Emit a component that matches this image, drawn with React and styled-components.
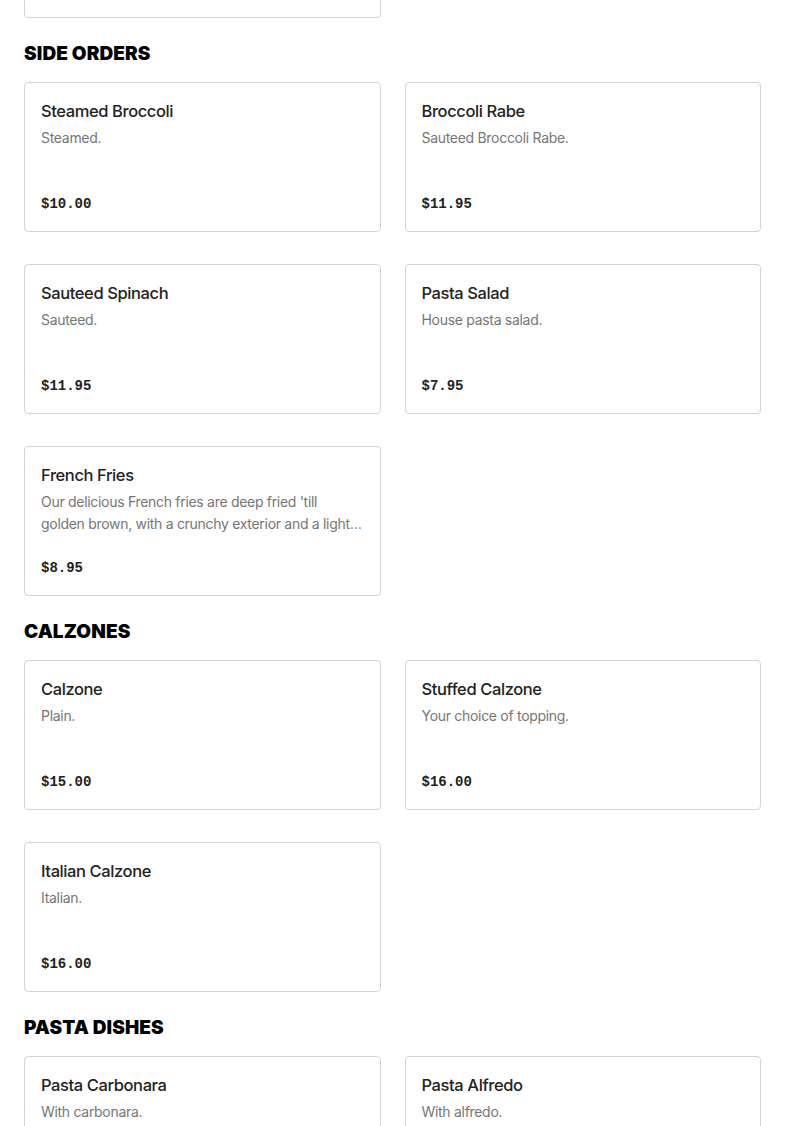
import React from "react";
import styled, { createGlobalStyle } from "styled-components";

const GlobalStyle = createGlobalStyle`
  html, body {
    margin: 0;
    padding: 0;
    background: #fff;
  }
  body {
    font-family: "Inter", "Liberation Sans", Arial, sans-serif;
    color: #222;
  }
`;

const menu = [
  {
    title: "Salads",
    hidden: true,
    items: [{ name: "House Salad", desc: "Mixed greens.", price: "$9.95" }],
  },
  {
    title: "Side Orders",
    items: [
      { name: "Steamed Broccoli", desc: "Steamed.", price: "$10.00" },
      { name: "Broccoli Rabe", desc: "Sauteed Broccoli Rabe.", price: "$11.95" },
      { name: "Sauteed Spinach", desc: "Sauteed.", price: "$11.95" },
      { name: "Pasta Salad", desc: "House pasta salad.", price: "$7.95" },
      {
        name: "French Fries",
        desc:
          "Our delicious French fries are deep fried 'till golden brown, with a crunchy exterior and a light fluffy inside.",
        price: "$8.95",
      },
    ],
  },
  {
    title: "Calzones",
    items: [
      { name: "Calzone", desc: "Plain.", price: "$15.00" },
      { name: "Stuffed Calzone", desc: "Your choice of topping.", price: "$16.00" },
      { name: "Italian Calzone", desc: "Italian.", price: "$16.00" },
    ],
  },
  {
    title: "Pasta Dishes",
    items: [
      { name: "Pasta Carbonara", desc: "With carbonara.", price: "$16.95" },
      { name: "Pasta Alfredo", desc: "With alfredo.", price: "$16.95" },
    ],
  },
];

const Page = styled.main`
  padding: 0 24px 40px;
  margin-top: -132px;
`;

const Section = styled.section`
  & + & {
    margin-top: 17px;
  }
`;

const Heading = styled.h2`
  margin: 0 0 11px;
  height: 36px;
  display: flex;
  align-items: center;
  font-family: "Inter", "Liberation Sans", sans-serif;
  font-weight: 900;
  font-size: 19px;
  letter-spacing: 0.1px;
  text-transform: uppercase;
  color: #000;
`;

const Grid = styled.div`
  display: grid;
  grid-template-columns: 1fr 1fr;
  column-gap: 24px;
  row-gap: 32px;
`;

const Card = styled.div`
  box-sizing: border-box;
  height: 150px;
  border: 1px solid #d4d4d4;
  border-radius: 4px;
  padding: 16px 16px 17px;
  display: flex;
  flex-direction: column;
  background: #fff;
`;

const Name = styled.div`
  font-size: 16.5px;
  line-height: 24px;
  font-weight: 500;
  color: #222;
  letter-spacing: -0.4px;
`;

const Desc = styled.div`
  margin-top: 4px;
  font-size: 14px;
  line-height: 22px;
  letter-spacing: -0.3px;
  color: #767676;
  height: 44px;
  overflow: hidden;
  display: -webkit-box;
  -webkit-line-clamp: 2;
  -webkit-box-orient: vertical;
`;

const Price = styled.div`
  margin-top: auto;
  font-family: "Liberation Mono", "DejaVu Sans Mono", monospace;
  font-weight: 700;
  font-size: 14px;
  line-height: 20px;
  color: #222;
`;

export default function App() {
  return (
    <>
      <GlobalStyle />
      <Page>
        {menu.map((section) => (
          <Section key={section.title}>
            {!section.hidden && <Heading>{section.title}</Heading>}
            <Grid>
              {section.items.map((item) => (
                <Card key={item.name}>
                  <Name>{item.name}</Name>
                  <Desc>{item.desc}</Desc>
                  <Price>{item.price}</Price>
                </Card>
              ))}
            </Grid>
          </Section>
        ))}
      </Page>
    </>
  );
}
